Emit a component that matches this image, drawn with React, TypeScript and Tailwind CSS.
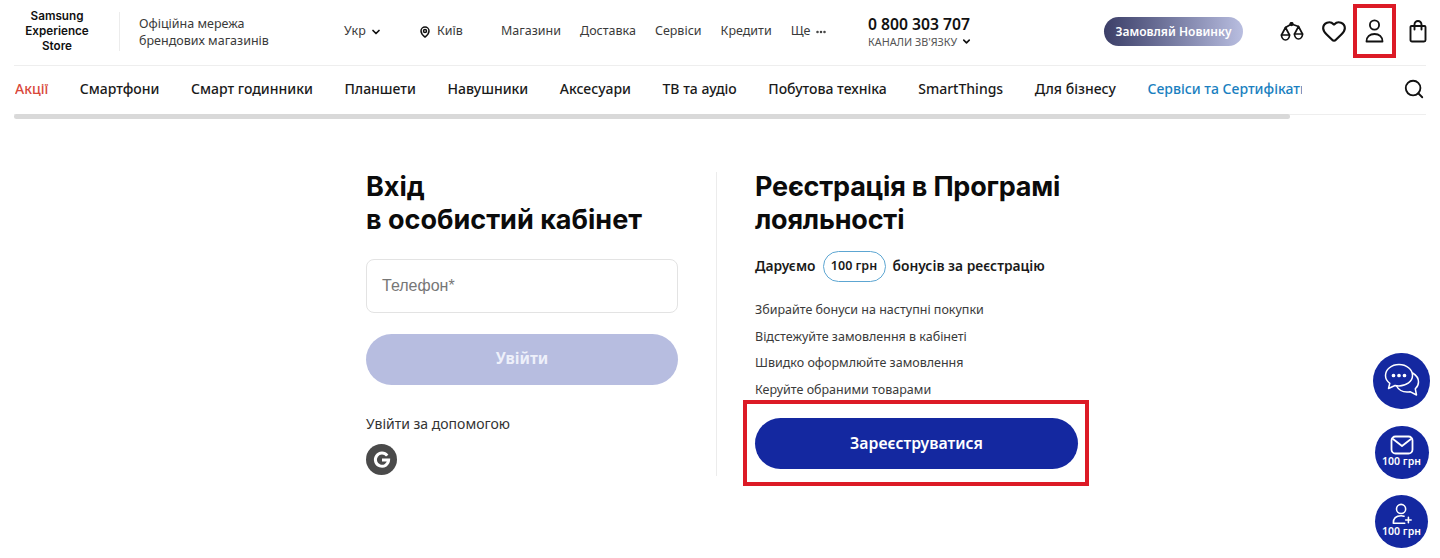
import { ChevronDown, Ellipsis, Heart, MapPin, Search } from "lucide-react";

const body = "font-['Noto_Sans',sans-serif]";
const sharp = "font-['Inter',sans-serif]";

const topLinks = ["Магазини", "Доставка", "Сервіси", "Кредити"];
const navItems = ["Смартфони", "Смарт годинники", "Планшети", "Навушники", "Аксесуари", "ТВ та аудіо", "Побутова техніка", "SmartThings", "Для бізнесу"];
const perks = ["Збирайте бонуси на наступні покупки", "Відстежуйте замовлення в кабінеті", "Швидко оформлюйте замовлення", "Керуйте обраними товарами"];

function Scales() {
  return (
    <svg width="24" height="20" viewBox="0 0 24 20" fill="none" stroke="#111" strokeWidth="1.700" strokeLinejoin="round" strokeLinecap="round">
      <path d="M5.500 5.500 11.500 2 18.500 4.500" />
      <circle cx="11.500" cy="2" r="1.300" fill="#111" />
      <path d="M5.500 5.500 1.500 13c0 2.800 1.800 5 4 5s4-2.200 4-5Z" />
      <path d="M18.500 4.500 14.500 12c0 2.800 1.800 5 4 5s4-2.200 4-5Z" />
      <path d="M1.500 13h8M14.500 12h8" />
    </svg>
  );
}

function UserIcon() {
  return (
    <svg width="19" height="24" viewBox="0 0 19 24" fill="none" stroke="#111" strokeWidth="1.800" strokeLinejoin="round">
      <circle cx="9.500" cy="6" r="4.600" />
      <path d="M1.500 22.500c0-4.700 3.400-7.500 8-7.500s8 2.800 8 7.500Z" />
    </svg>
  );
}

function Bag() {
  return (
    <svg width="18" height="23" viewBox="0 0 18 23" fill="none" stroke="#111" strokeWidth="1.900" strokeLinejoin="round" strokeLinecap="round">
      <path d="M2.500 6h13a1 1 0 0 1 1 1v13a1.500 1.500 0 0 1-1.500 1.500H3A1.500 1.500 0 0 1 1.500 20V7a1 1 0 0 1 1-1Z" />
      <path d="M5.500 9.500V4.500a3.500 3.500 0 0 1 7 0v5" />
    </svg>
  );
}

function Google() {
  return (
    <svg width="18" height="18" viewBox="0 0 18 18" fill="none" stroke="#fff" strokeWidth="3">
      <path d="M14.200 4.600A6.600 6.600 0 1 0 15.600 9H9" />
    </svg>
  );
}

function Chat() {
  return (
    <svg width="38" height="38" viewBox="0 0 38 38" fill="none" stroke="#fff" strokeWidth="1.500" strokeLinejoin="round" strokeLinecap="round">
      <path d="M16 2.500C8.500 2.500 2.500 7.500 2.500 13.500c0 3.200 1.700 5.900 4.300 7.800L5.500 26.500l6.500-3c1.300.3 2.600.4 4 .4 7.500 0 13.500-4.500 13.500-10.400S23.500 2.500 16 2.500Z" />
      <path d="M29.600 11c3.400 2 5.900 5 5.900 9 0 2.700-1.200 5-3.200 6.800L33.500 33l-6.500-3.300c-1 .2-2 .3-3 .3-4.500 0-8.400-2.100-10.500-6" />
      <circle cx="10.500" cy="13.500" r="1.100" fill="#fff" />
      <circle cx="16" cy="13.500" r="1.100" fill="#fff" />
      <circle cx="21.500" cy="13.500" r="1.100" fill="#fff" />
    </svg>
  );
}

function Mail() {
  return (
    <svg width="24" height="20" viewBox="0 0 24 20" fill="none" stroke="#fff" strokeWidth="1.800" strokeLinejoin="round" strokeLinecap="round">
      <rect x="1.500" y="1.500" width="21" height="17" rx="4" />
      <path d="m3 4 9 7 9-7" />
    </svg>
  );
}

function UserPlus() {
  return (
    <svg width="22" height="22" viewBox="0 0 24 24" fill="none" stroke="#fff" strokeWidth="1.700" strokeLinecap="round" strokeLinejoin="round">
      <circle cx="11" cy="6.500" r="5" />
      <path d="M15 22H2.500c0-5 3-8 8.500-8 1.200 0 2.300.2 3.200.5" />
      <path d="M19 15.500v6M16 18.500h6" />
    </svg>
  );
}

function Header() {
  return (
    <header className="flex h-[65px] items-center pb-[2px]">
      <div className="w-[119px] pl-[24px] text-center font-['Inter',sans-serif] text-[11.700px] leading-[15px] font-semibold text-[#111]">
        <div className="w-[66px]">Samsung Experience Store</div>
      </div>
      <div className="h-[39px] w-px bg-[#ececec]" />
      <div className="ml-[19px] w-[205px] text-[12.500px] leading-[17px] text-[#3a3a3a]">
        Офіційна мережа<br />брендових магазинів
      </div>
      <div className="flex w-[75px] items-center gap-1 text-[12.500px] text-[#3a3a3a]">
        Укр <ChevronDown size={12} strokeWidth={3.500} className="text-[#111]" />
      </div>
      <div className="flex w-[82px] items-center gap-[6px] text-[12.500px] text-[#3a3a3a]">
        <MapPin size={12} strokeWidth={3} className="text-[#111]" /> Київ
      </div>
      <nav className="flex w-[367px] items-center gap-[19px] text-[12.500px] text-[#3a3a3a]">
        {topLinks.map((l) => <span key={l}>{l}</span>)}
        <span className="flex items-center gap-[5px]">Ще <Ellipsis size={12} strokeWidth={3} /></span>
      </nav>
      <div className="w-[236px]">
        <div className="text-[15.700px] leading-[20px] font-semibold text-[#111]">0 800 303 707</div>
        <div className="flex items-center gap-1 text-[10.800px] leading-[16px] text-[#555]">
          КАНАЛИ ЗВ'ЯЗКУ <ChevronDown size={11} strokeWidth={3.500} className="text-[#111]" />
        </div>
      </div>
      <div className="flex h-[29px] w-[139px] items-center justify-center rounded-full bg-gradient-to-r from-[#3c3f68] to-[#b9bee0] text-[12px] font-semibold text-white">
        Замовляй Новинку
      </div>
      <div className="ml-[37px] flex w-[41px] justify-start"><Scales /></div>
      <Heart size={26} strokeWidth={2} className="mb-[1px] text-[#111]" />
      {/* red annotation frame around the profile icon */}
      <div className="mb-[1px] ml-[6px] flex h-[54px] w-[43px] items-center justify-center border-[4px] border-[#dc1a26]">
        <UserIcon />
      </div>
      <div className="ml-[13px] flex"><Bag /></div>
    </header>
  );
}

function CategoryNav() {
  return (
    <div className="mx-[14px] border-t border-[#eeeeee]">
      <div className="flex h-[49px] items-center justify-between border-b border-[#eeeeee] pb-[3px] pl-[1px]">
        <div className="flex w-[1287px] items-center gap-[31.500px] overflow-hidden whitespace-nowrap text-[14px] font-medium text-[#1a1a1a]">
          <span className="text-[#d9483b]">Акції</span>
          {navItems.map((n) => <span key={n}>{n}</span>)}
          <span className="text-[#1a7fc0]">Сервіси та Сертифікати</span>
        </div>
        <Search size={22} strokeWidth={2} className="mr-[1px] text-[#111]" />
      </div>
      <div className="-mt-px h-[5px] w-[1276px] rounded-full bg-[#d9d9d9]" />
    </div>
  );
}

function LoginColumn() {
  return (
    <section className="w-[312px]">
      <h2 className={`${sharp} -mt-[2px] text-[27px] leading-[33px] font-bold text-[#0b0b0b]`}>
        Вхід<br />в особистий кабінет
      </h2>
      <div className="mt-[23px] flex h-[54px] items-center rounded-[8px] border border-[#e3e3e3] px-[15px] font-['Liberation_Sans',sans-serif] text-[16px] text-[#777]">
        Телефон*
      </div>
      <button className="mt-[21px] h-[51px] w-full rounded-full bg-[#b7bde0] pb-[2px] text-[15.500px] font-bold text-[#eef0fa]">
        Увійти
      </button>
      <p className="mt-[29px] text-[14px] leading-[20px] text-[#333]">Увійти за допомогою</p>
      <div className="mt-[10px] flex h-[31px] w-[31px] items-center justify-center rounded-full bg-[#4a4a4a]">
        <Google />
      </div>
    </section>
  );
}

function RegisterColumn() {
  return (
    <section className="w-[334px]">
      <h2 className={`${sharp} -mt-[2px] text-[27px] leading-[33px] font-bold tracking-[-0.2px] text-[#0b0b0b]`}>
        Реєстрація в Програмі<br />лояльності
      </h2>
      <div className="mt-[15px] flex items-center text-[13.800px] font-semibold text-[#1a1a1a]">
        Даруємо
        <span className="mx-[7px] flex h-[31px] w-[63px] items-center justify-center rounded-full border border-[#5da6d2] text-[12.500px]">100 грн</span>
        бонусів за реєстрацію
      </div>
      <ul className="mt-[18px] flex flex-col gap-[7px] text-[12.500px] leading-[19.500px] text-[#3a3a3a]">
        {perks.map((p) => <li key={p}>{p}</li>)}
      </ul>
      {/* red annotation frame around the button */}
      <div className="mt-[1px] ml-[-12px] w-[346px] border-[4px] border-[#dc1a26] px-[8px] pt-[14px] pb-[13px]">
        <button className="h-[51px] w-[323px] rounded-full bg-[#1428a0] text-[15.800px] font-semibold text-white">
          Зареєструватися
        </button>
      </div>
    </section>
  );
}

function FloatingButtons() {
  return (
    <div className="absolute top-[353px] left-[1373px] flex w-[57px] flex-col items-center">
      <div className="flex h-[56px] w-[57px] items-center justify-center rounded-full bg-[#1428a0]"><Chat /></div>
      <div className="mt-[17px] flex h-[53px] w-[54px] flex-col items-center justify-center rounded-full bg-[#1428a0] pb-[2px] text-[10.500px] leading-[13px] font-semibold text-white">
        <Mail />
        100 грн
      </div>
      <div className="mt-[16px] flex h-[53px] w-[53px] flex-col items-center justify-center rounded-full bg-[#1428a0] pb-[2px] text-[10.500px] leading-[13px] font-semibold text-white">
        <UserPlus />
        100 грн
      </div>
    </div>
  );
}

export default function App() {
  return (
    <div className={`${body} relative h-[558px] w-[1440px] overflow-hidden bg-white`}>
      <Header />
      <CategoryNav />
      <main className="mt-[53px] flex pl-[366px]">
        <LoginColumn />
        <div className="mx-[38px] h-[304px] w-px bg-[#ececec]" />
        <RegisterColumn />
      </main>
      <FloatingButtons />
    </div>
  );
}
